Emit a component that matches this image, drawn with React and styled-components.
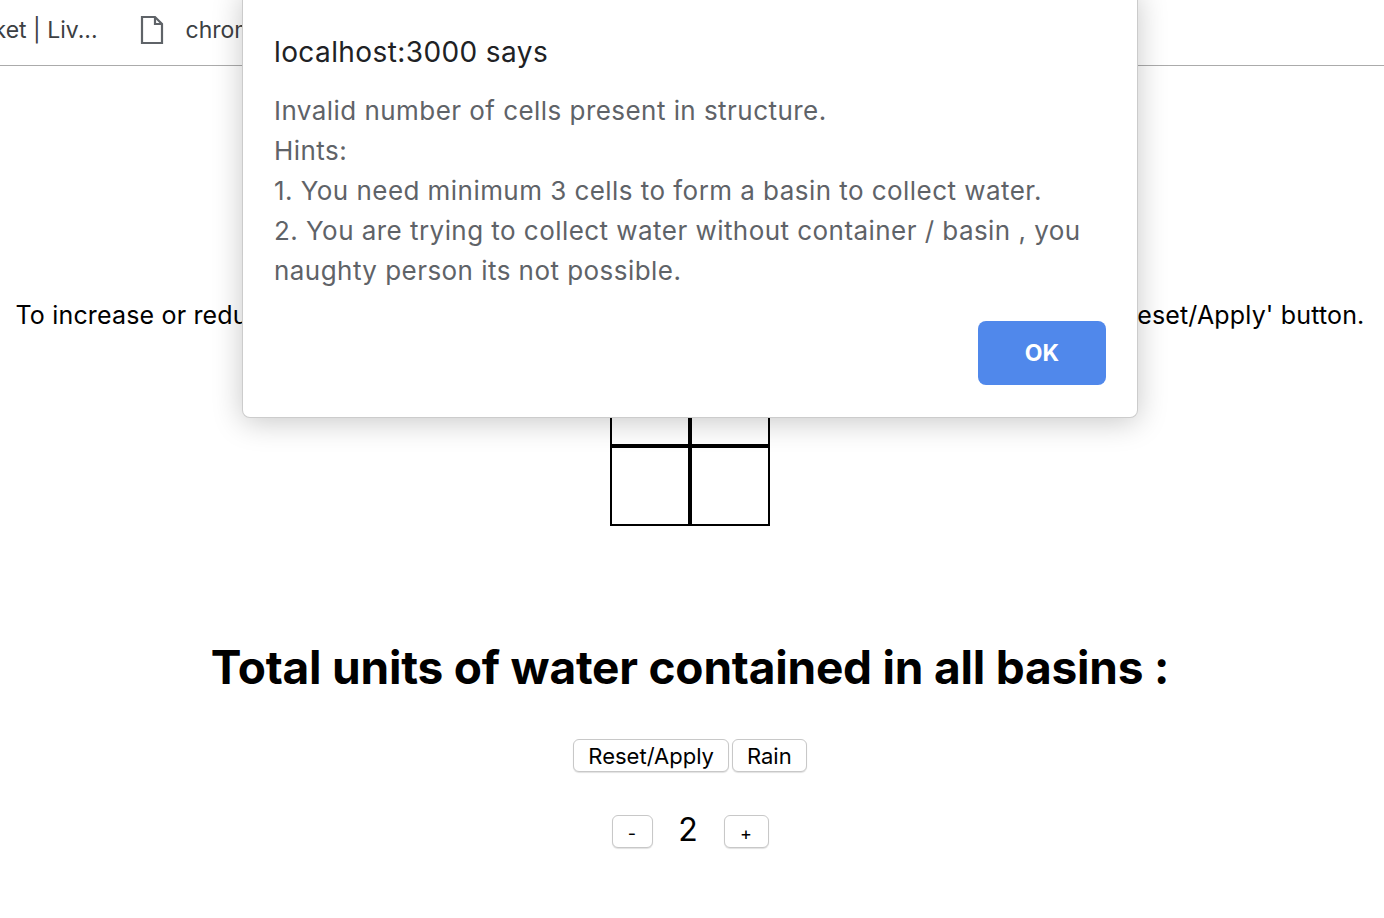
import React from 'react';
import styled, { createGlobalStyle } from 'styled-components';

const GlobalStyle = createGlobalStyle`
  html, body {
    margin: 0;
    padding: 0;
    background: #fff;
    font-family: "Inter", "Liberation Sans", sans-serif;
  }
`;

const Page = styled.div`
  position: relative;
  width: 1384px;
  height: 918px;
  overflow: hidden;
`;

const BookmarkBar = styled.div`
  height: 65px;
  border-bottom: 1px solid #ababab;
  display: flex;
  align-items: center;
  color: #3c4043;
  font-size: 23px;
`;

const Bookmark = styled.div`
  display: flex;
  align-items: center;
  gap: 22px;
  margin-left: ${({ offset }) => offset || 0}px;
  white-space: nowrap;
  padding-bottom: 6px;
`;

const Main = styled.main`
  width: 1380px;
  display: flex;
  flex-direction: column;
  align-items: center;
  color: #000;
`;

const Instructions = styled.p`
  margin: 234px 0 0;
  font-size: 25px;
  line-height: 30px;
  letter-spacing: 0.17px;
  white-space: nowrap;
`;

const Structure = styled.div`
  margin-top: 36px;
  display: grid;
  grid-template-columns: repeat(2, 80px);
  grid-auto-rows: 80px;
`;

const Cell = styled.div`
  box-sizing: border-box;
  border: 2px solid #000;
  background: ${({ water }) => (water ? '#4aa3f0' : '#fff')};
`;

const Total = styled.h1`
  margin: 114px 0 0;
  font-size: 46px;
  line-height: 55px;
  font-weight: 700;
  letter-spacing: -0.2px;
`;

const ButtonRow = styled.div`
  margin-top: 44px;
  display: flex;
  gap: 3px;
`;

const Counter = styled.div`
  margin-top: 42px;
  display: flex;
  align-items: center;
`;

const Button = styled.button`
  height: 33px;
  min-width: ${({ small }) => (small ? '41px' : 'auto')};
  padding: ${({ small }) => (small ? '4px 0 0' : '0 14px')};
  box-sizing: border-box;
  background: #fff;
  border: 1px solid #c8c8c8;
  border-radius: 6px;
  box-shadow: 0 1px 1px rgba(0, 0, 0, 0.12);
  font-family: "Inter", "Liberation Sans", sans-serif;
  font-size: ${({ small }) => (small ? '18px' : '22px')};
  color: #000;
  cursor: pointer;
`;

const Count = styled.span`
  font-size: 32px;
  width: 71px;
  text-align: center;
  margin-top: -4px;
`;

const Dialog = styled.div`
  position: absolute;
  left: 242px;
  top: -10px;
  width: 896px;
  height: 428px;
  box-sizing: border-box;
  padding: 42px 31px 32px;
  background: #fff;
  border: 1px solid rgba(0, 0, 0, 0.2);
  border-top: none;
  border-radius: 0 0 8px 8px;
  box-shadow: 0 4px 30px rgba(0, 0, 0, 0.22);
  display: flex;
  flex-direction: column;
`;

const DialogTitle = styled.div`
  font-size: 28px;
  line-height: 40px;
  letter-spacing: 0.4px;
  color: #202124;
`;

const DialogBody = styled.div`
  margin-top: 19px;
  font-size: 26px;
  line-height: 40px;
  letter-spacing: 0.45px;
  color: #5f6368;
  white-space: pre-line;
`;

const DialogActions = styled.div`
  margin-top: auto;
  display: flex;
  justify-content: flex-end;
`;

const OkButton = styled.button`
  width: 128px;
  height: 64px;
  border: none;
  border-radius: 8px;
  background: #5088eb;
  color: #fff;
  font-family: "Inter", "Liberation Sans", sans-serif;
  font-size: 23px;
  font-weight: 700;
`;

const FileIcon = () => (
  <svg width="24" height="30" viewBox="0 0 24 30" fill="none" stroke="#5f6368" strokeWidth="2.2" strokeLinejoin="miter">
    <path d="M2 2h13l7 7v19H2z" />
    <path d="M15 2v7h7" />
  </svg>
);

const message =
  'Invalid number of cells present in structure.\nHints:\n1. You need minimum 3 cells to form a basin to collect water.\n2. You are trying to collect water without container / basin , you naughty person its not possible.';

export default function App() {
  const size = 2;
  const cells = Array.from({ length: size * size });

  return (
    <Page>
      <GlobalStyle />
      <BookmarkBar>
        <Bookmark offset={-40}>Ticket | Liv...</Bookmark>
        <Bookmark offset={42}>
          <FileIcon />
          chrome://settings
        </Bookmark>
      </BookmarkBar>
      <Main>
        <Instructions>
          To increase or reduce the size of the structure, use '+' and '-' buttons and then click on the 'Reset/Apply' button.
        </Instructions>
        <Structure>
          {cells.map((_, i) => (
            <Cell key={i} />
          ))}
        </Structure>
        <Total>Total units of water contained in all basins :</Total>
        <ButtonRow>
          <Button>Reset/Apply</Button>
          <Button>Rain</Button>
        </ButtonRow>
        <Counter>
          <Button small>-</Button>
          <Count>{size}</Count>
          <Button small style={{ minWidth: 45 }}>+</Button>
        </Counter>
      </Main>
      <Dialog>
        <DialogTitle>localhost:3000 says</DialogTitle>
        <DialogBody>{message}</DialogBody>
        <DialogActions>
          <OkButton>OK</OkButton>
        </DialogActions>
      </Dialog>
    </Page>
  );
}
